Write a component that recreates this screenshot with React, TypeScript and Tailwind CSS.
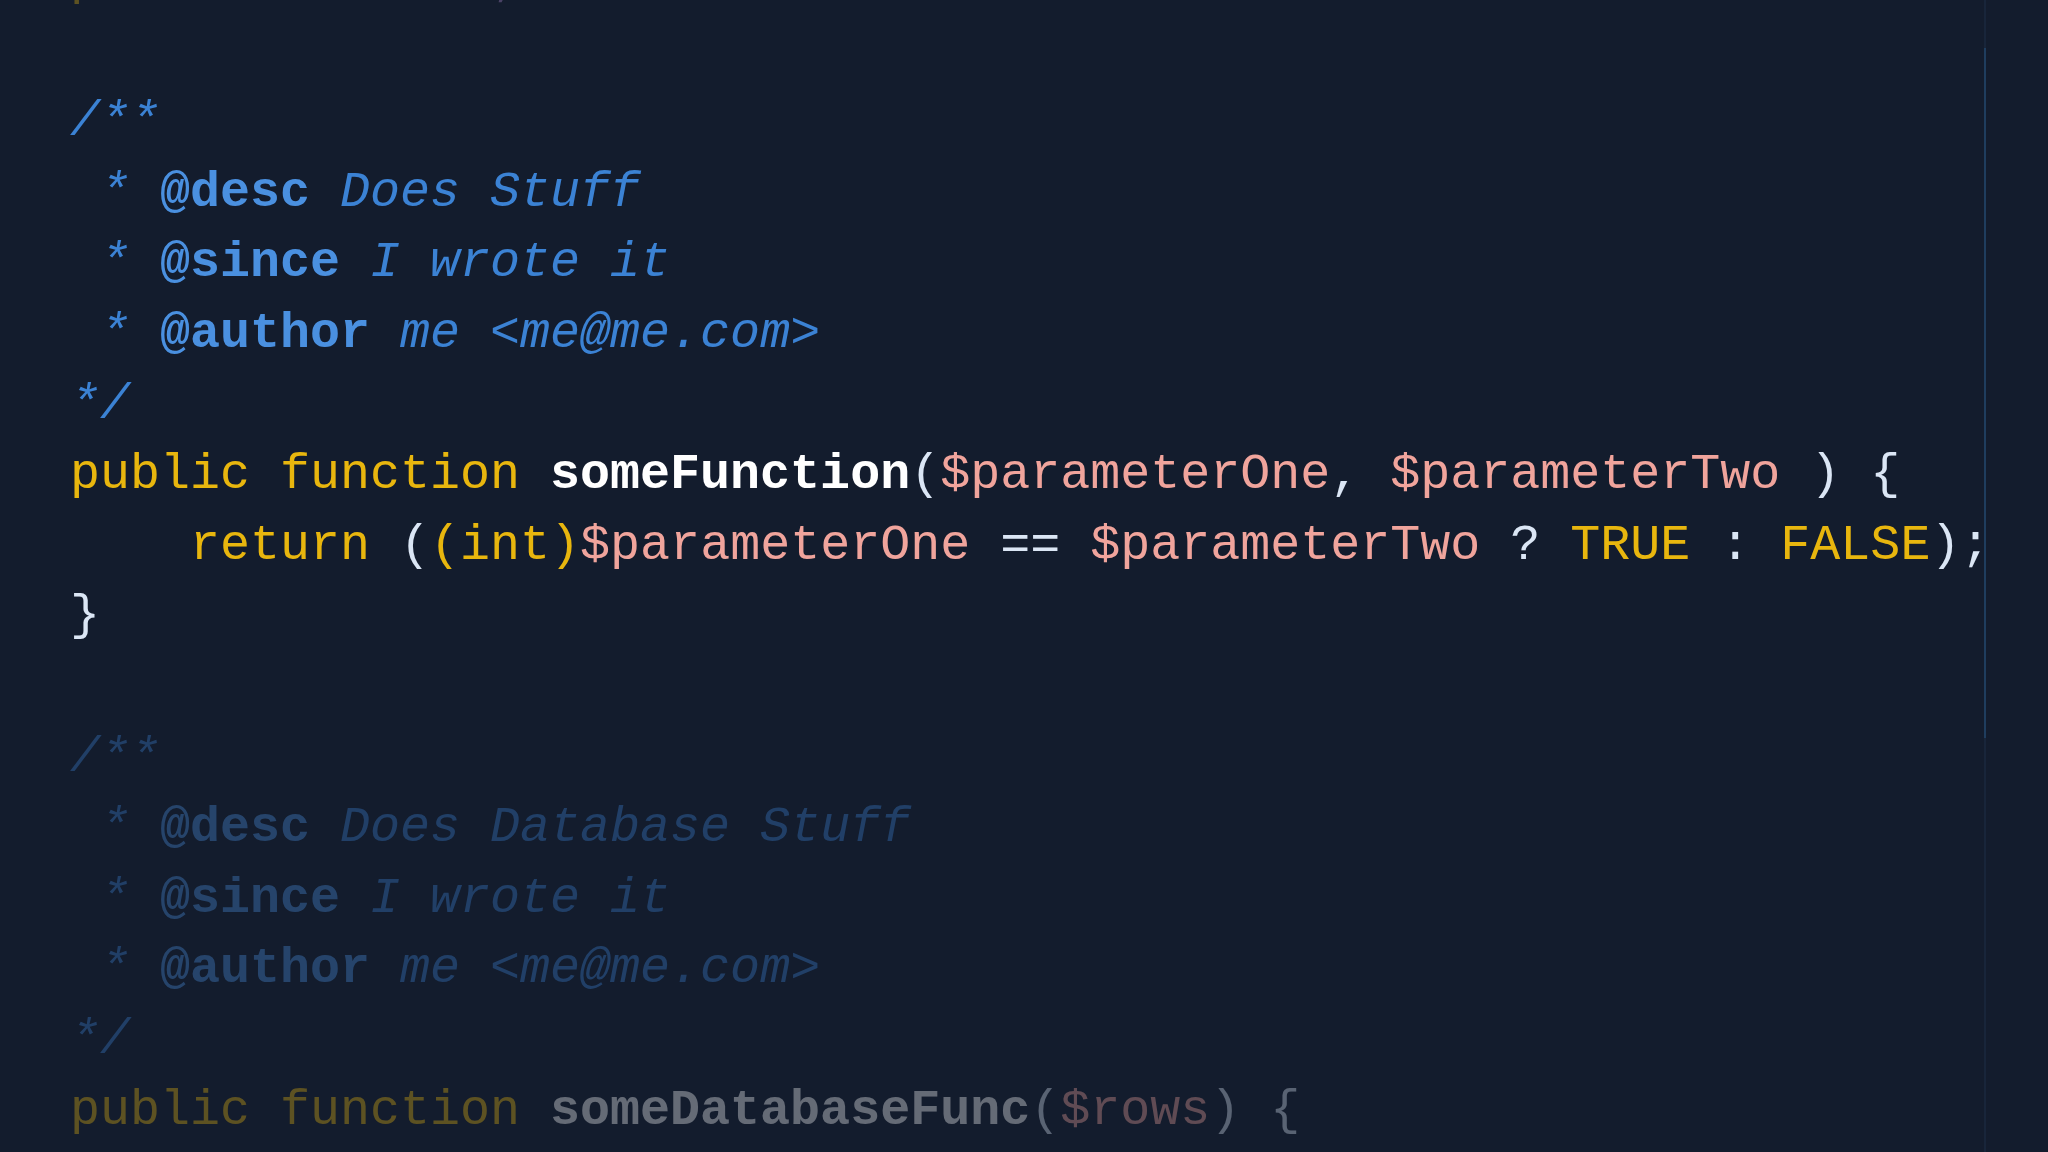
import React from 'react';

type Token = { t: string; c?: string };

const kw = 'text-[#e8b60e]';
const vr = 'text-[#f0a49c]';
const pn = 'text-[#dbe6f5]';
const cm = 'text-[#3b82d4] italic';
const tag = 'text-[#4a90e0] font-bold';
const fn = 'text-white font-bold';

const comment = (name: string, rest: string): Token[] => [
  { t: ' * ', c: cm },
  { t: name, c: tag },
  { t: ' ' + rest, c: cm },
];

const focused: Token[][] = [
  [{ t: '/**', c: cm }],
  comment('@desc', 'Does Stuff'),
  comment('@since', 'I wrote it'),
  comment('@author', 'me <me@me.com>'),
  [{ t: '*/', c: cm }],
  [
    { t: 'public function ', c: kw },
    { t: 'someFunction', c: fn },
    { t: '(', c: pn },
    { t: '$parameterOne', c: vr },
    { t: ', ', c: pn },
    { t: '$parameterTwo', c: vr },
    { t: ' ) {', c: pn },
  ],
  [
    { t: '    return ', c: kw },
    { t: '(', c: pn },
    { t: '(int)', c: kw },
    { t: '$parameterOne', c: vr },
    { t: ' == ', c: pn },
    { t: '$parameterTwo', c: vr },
    { t: ' ? ', c: pn },
    { t: 'TRUE', c: kw },
    { t: ' : ', c: pn },
    { t: 'FALSE', c: kw },
    { t: ');', c: pn },
  ],
  [{ t: '}', c: pn }],
  [],
];

const after: Token[][] = [
  [{ t: '/**', c: cm }],
  comment('@desc', 'Does Database Stuff'),
  comment('@since', 'I wrote it'),
  comment('@author', 'me <me@me.com>'),
  [{ t: '*/', c: cm }],
  [
    { t: 'public function ', c: kw },
    { t: 'someDatabaseFunc', c: fn },
    { t: '(', c: pn },
    { t: '$rows', c: vr },
    { t: ') {', c: pn },
  ],
];

const Line = ({ tokens }: { tokens: Token[] }) => (
  <div className="h-[70.6px] whitespace-pre">
    {tokens.length === 0 ? ' ' : tokens.map((tk, i) => (
      <span key={i} className={tk.c}>{tk.t}</span>
    ))}
  </div>
);

export default function App() {
  return (
    <div className="h-[1152px] w-[2048px] overflow-hidden bg-[#131c2d] flex">
      {/* Editor text */}
      <div
        className="w-[1984px] shrink-0 pl-[70px] mt-[-54px] text-[50px] leading-[70.6px]"
        style={{ fontFamily: '"Liberation Mono", "DejaVu Sans Mono", monospace' }}
      >
        <div className="opacity-35">
          <Line tokens={[{ t: 'protected ', c: kw }, { t: '$_db;', c: 'text-[#b08ad0]' }]} />
          <Line tokens={[]} />
        </div>
        {focused.map((l, i) => <Line key={i} tokens={l} />)}
        <div className="opacity-35">
          {after.map((l, i) => <Line key={i} tokens={l} />)}
        </div>
      </div>

      {/* Right guide */}
      <div className="w-[2px] shrink-0 h-full bg-[#18253a] flex flex-col pt-[48px]">
        <div className="h-[690px] bg-[#1f3d5e]" />
      </div>
      <div className="flex-1" />
    </div>
  );
}
